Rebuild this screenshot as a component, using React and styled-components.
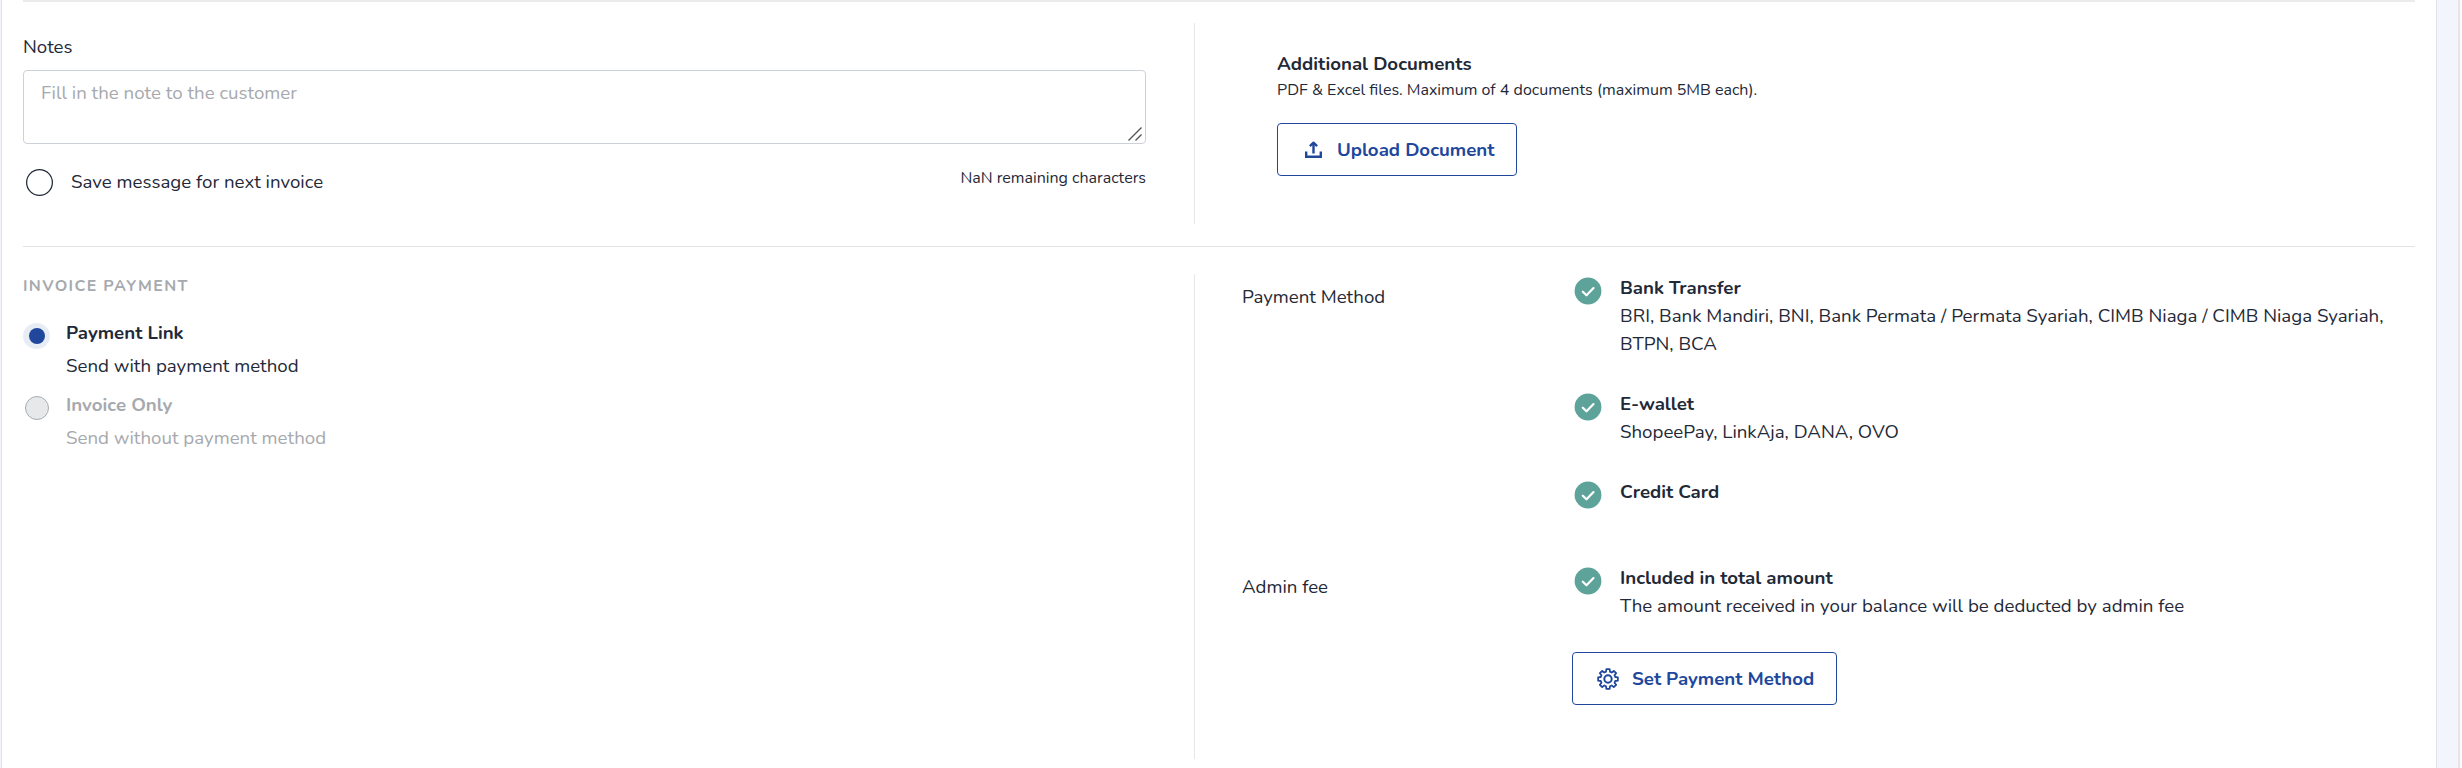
import React from "react";
import styled, { createGlobalStyle } from "styled-components";

const ink = "#1f2937";
const muted = "#a6a9ad";
const blue = "#20479c";
const rule = "#e2e3e5";

const GlobalStyle = createGlobalStyle`
  *, *::before, *::after { box-sizing: border-box; }
  body {
    margin: 0;
    background: #fff;
    color: ${ink};
    font-family: "Nunito", "Lato", sans-serif;
    font-size: 18.7px;
    line-height: 28px;
  }
`;

const Page = styled.div`
  display: flex;
  height: 768px;
  overflow: hidden;
  padding-left: 1px;
  background: #f2f5fb;
`;

const Card = styled.main`
  width: 2436px;
  flex: none;
  padding: 0 21px;
  border: solid #dfe2e8;
  border-width: 0 1px;
  background: #fff;
`;

const ScrollTrack = styled.aside`
  width: 4px;
  margin-left: auto;
  background: #fafafa;
  border-left: 2px solid #e6e6e6;
`;

const NotesSection = styled.section`
  display: flex;
  height: 247px;
  padding: 21px 0 22px;
  border-top: 2px solid #ebebeb;
  border-bottom: 1px solid ${rule};
`;

const PaymentSection = styled.section`
  display: flex;
  height: 485px;
  margin-top: 27px;
`;

const LeftPanel = styled.div`
  width: 1172px;
  flex: none;
  padding-right: 48px;
  border-right: 1px solid #e6e7e9;
`;

const Text = styled.span`
  display: block;
  font-weight: ${(p) => (p.$bold ? 700 : 400)};
  color: ${(p) => (p.$muted ? muted : "inherit")};
`;

const SmallText = styled(Text)`
  font-size: 16px;
  line-height: 24px;
`;

const CharacterCount = styled(SmallText)`
  padding-top: 2px;
`;

const FieldLabel = styled.label`
  display: block;
  padding-top: 10px;
`;

const NoteField = styled.div`
  position: relative;
  height: 74px;
  margin-top: 9px;
`;

const NoteInput = styled.textarea`
  display: block;
  width: 100%;
  height: 100%;
  padding: 8px 17px;
  border: 1px solid #cdd1d8;
  border-radius: 4px;
  outline: none;
  resize: none;
  font: inherit;
  color: ${ink};
  &::placeholder { color: ${muted}; opacity: 1; }
`;

const Grip = styled.svg`
  position: absolute;
  right: 3px;
  bottom: 2px;
`;

const NoteFooter = styled.div`
  display: flex;
  justify-content: space-between;
  padding-top: 20px;
`;

const SaveOption = styled.label`
  display: flex;
  gap: 18.5px;
  padding: 4px 0 0 2.5px;
`;

const Circle = styled.span`
  width: 27px;
  height: 27px;
  margin-top: 1px;
  border-radius: 50%;
  box-shadow: inset 0 0 0 1.25px ${ink};
`;

const Documents = styled.div`
  padding: 27px 0 0 82px;
`;

const OutlineButton = styled.button`
  display: flex;
  align-items: center;
  gap: ${(p) => p.$gap}px;
  width: ${(p) => p.$width}px;
  height: 53px;
  margin-top: ${(p) => p.$top}px;
  padding: 1px 0 0 ${(p) => p.$inset}px;
  border: 1px solid ${blue};
  border-radius: 4px;
  background: #fff;
  color: ${blue};
  font: inherit;
  white-space: nowrap;
  svg { margin-bottom: 1px; }
`;

const SectionTitle = styled.h2`
  margin: 0 0 20px;
  font-size: 16px;
  line-height: 24px;
  font-weight: 700;
  letter-spacing: 1.36px;
  color: ${muted};
`;

const Option = styled.div`
  display: grid;
  grid-template-columns: 27px auto;
  column-gap: 16px;
  height: 72px;
`;

const OptionText = styled.div`
  display: flex;
  flex-direction: column;
  gap: 5px;
  padding-top: 1px;
`;

const Radio = styled.span`
  display: grid;
  place-items: center;
  justify-self: center;
  width: ${(p) => (p.$checked ? 27 : 24)}px;
  height: ${(p) => (p.$checked ? 26 : 24)}px;
  margin-top: ${(p) => (p.$checked ? 5 : 6)}px;
  border-radius: 50%;
  border: ${(p) => (p.$checked ? "none" : "1px solid #a9acb0")};
  background: ${(p) => (p.$checked ? "#e8edf5" : "#e7e8ea")};
  &::after {
    content: "";
    width: 16px;
    height: 16px;
    border-radius: 50%;
    background: ${(p) => (p.$checked ? blue : "transparent")};
  }
`;

const Details = styled.div`
  display: flex;
  flex: 1;
  flex-direction: column;
  gap: 55px;
  padding-left: 47px;
`;

const DetailRow = styled.div`
  display: grid;
  grid-template-columns: 330px 1fr;
`;

const DetailLabel = styled(Text)`
  padding-top: 9px;
`;

const MethodList = styled.div`
  display: flex;
  flex-direction: column;
  gap: 32px;
`;

const Method = styled.div`
  display: grid;
  grid-template-columns: 28px 1fr;
  column-gap: 18px;
  padding-left: 2px;
`;

const CheckSvg = styled.svg`
  margin-top: 3px;
`;

const CheckIcon = () => (
  <CheckSvg width="28" height="28" viewBox="0 0 28 28" fill="none">
    <circle cx="14" cy="14" r="13.4" fill="#5ea399" />
    <path d="M8.8 14.7l3.7 3.6 7-7.2" stroke="#fff" strokeWidth="2.2" strokeLinecap="round" strokeLinejoin="round" />
  </CheckSvg>
);

const UploadIcon = () => (
  <svg width="17" height="17" viewBox="0 0 17 17" fill="none" stroke="currentColor" strokeWidth="2.4">
    <path d="M1.2 10.4v5.4h14.6v-5.4M8.5 12.4V2" />
    <path d="M4.9 5.1l3.6-3.4 3.6 3.4" strokeLinejoin="round" />
  </svg>
);

// Eight-toothed cog outline: two outer and two inner corners per tooth.
const cogPath =
  Array.from({ length: 8 }, (_, i) =>
    [[-15.5, 7.5], [-9.5, 10], [9.5, 10], [15.5, 7.5]]
      .map(([offset, r]) => {
        const a = ((i * 45 + offset) * Math.PI) / 180;
        return `${(11 + r * Math.sin(a)).toFixed(2)} ${(11 - r * Math.cos(a)).toFixed(2)}`;
      })
      .join("L")
  ).reduce((d, part) => d + (d ? "L" : "M") + part, "") + "Z";

const CogIcon = () => (
  <svg width="22" height="22" viewBox="0 0 22 22" fill="none" stroke="currentColor" strokeWidth="1.8" strokeLinejoin="round" overflow="visible">
    <path d={cogPath} />
    <circle cx="11" cy="11" r="3.7" strokeWidth="2" />
  </svg>
);

const methods = [
  {
    title: "Bank Transfer",
    text: "BRI, Bank Mandiri, BNI, Bank Permata / Permata Syariah, CIMB Niaga / CIMB Niaga Syariah, BTPN, BCA",
  },
  { title: "E-wallet", text: "ShopeePay, LinkAja, DANA, OVO" },
  { title: "Credit Card" },
];

const MethodItem = ({ title, text }) => (
  <Method>
    <CheckIcon />
    <div>
      <Text $bold>{title}</Text>
      {text && <Text>{text}</Text>}
    </div>
  </Method>
);

export default function App() {
  return (
    <>
      <GlobalStyle />
      <Page>
        <Card>
          <NotesSection>
            <LeftPanel>
              <FieldLabel htmlFor="note">Notes</FieldLabel>
              <NoteField>
                <NoteInput id="note" placeholder="Fill in the note to the customer" />
                <Grip width="16" height="16" viewBox="0 0 16 16" stroke="#555" strokeWidth="1.4">
                  <path d="M1.5 14.5L14.5 1.5M8.5 14.5L14.5 8.5" />
                </Grip>
              </NoteField>
              <NoteFooter>
                <SaveOption>
                  <Circle />
                  <Text>Save message for next invoice</Text>
                </SaveOption>
                <CharacterCount>NaN remaining characters</CharacterCount>
              </NoteFooter>
            </LeftPanel>
            <Documents>
              <Text $bold>Additional Documents</Text>
              <SmallText>PDF &amp; Excel files. Maximum of 4 documents (maximum 5MB each).</SmallText>
              <OutlineButton $width={240} $inset={27} $gap={15} $top={21}>
                <UploadIcon />
                <Text $bold>Upload Document</Text>
              </OutlineButton>
            </Documents>
          </NotesSection>

          <PaymentSection>
            <LeftPanel>
              <SectionTitle>INVOICE PAYMENT</SectionTitle>
              <Option>
                <Radio $checked />
                <OptionText>
                  <Text $bold>Payment Link</Text>
                  <Text>Send with payment method</Text>
                </OptionText>
              </Option>
              <Option>
                <Radio />
                <OptionText>
                  <Text $bold $muted>Invoice Only</Text>
                  <Text $muted>Send without payment method</Text>
                </OptionText>
              </Option>
            </LeftPanel>
            <Details>
              <DetailRow>
                <DetailLabel>Payment Method</DetailLabel>
                <MethodList>
                  {methods.map((m) => <MethodItem key={m.title} {...m} />)}
                </MethodList>
              </DetailRow>
              <DetailRow>
                <DetailLabel>Admin fee</DetailLabel>
                <div>
                  <MethodItem
                    title="Included in total amount"
                    text="The amount received in your balance will be deducted by admin fee"
                  />
                  <OutlineButton $width={265} $inset={24} $gap={13} $top={32}>
                    <CogIcon />
                    <Text $bold>Set Payment Method</Text>
                  </OutlineButton>
                </div>
              </DetailRow>
            </Details>
          </PaymentSection>
        </Card>
        <ScrollTrack />
      </Page>
    </>
  );
}
